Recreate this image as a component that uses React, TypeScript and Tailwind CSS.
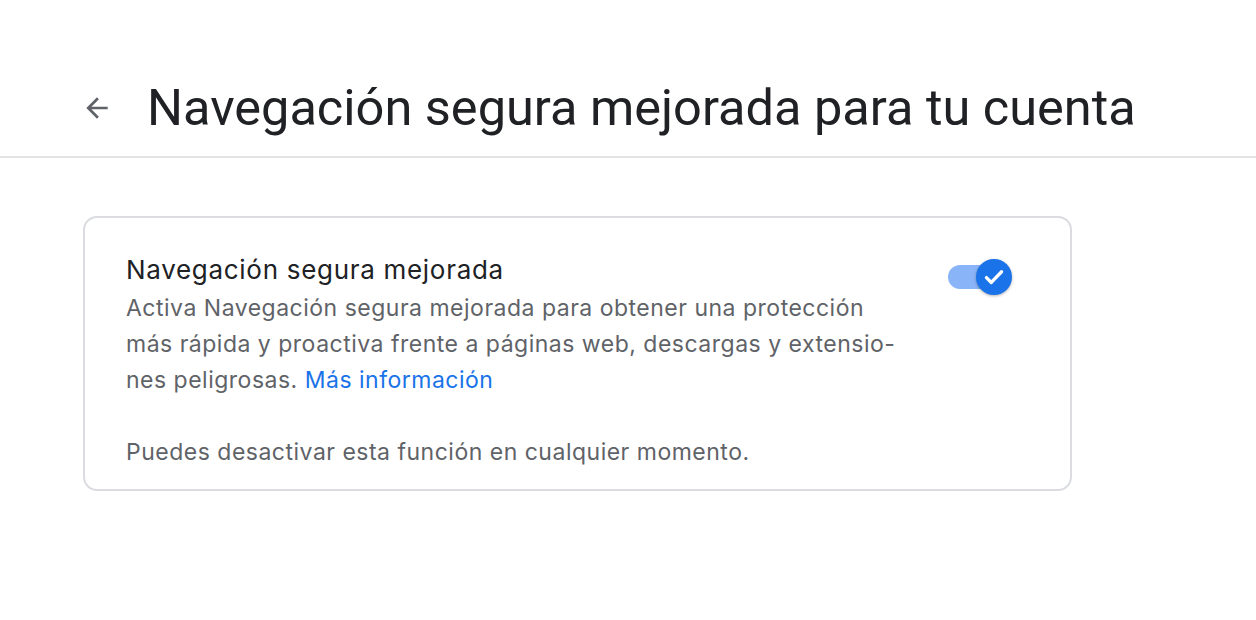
import React from 'react';

const ArrowLeft = () => (
  <svg viewBox="0 0 24 24" className="w-[32px] h-[32px]" fill="#5f6368">
    <path d="M20 11H7.83l5.59-5.59L12 4l-8 8 8 8 1.41-1.41L7.83 13H20v-2z" />
  </svg>
);

const Toggle = () => (
  <div className="relative w-[66px] h-[40px] flex items-center">
    <div className="w-[52px] h-[24px] rounded-full bg-[#8ab4f8]" />
    <div className="absolute left-[28px] top-[2px] w-[36px] h-[36px] rounded-full bg-[#1a73e8] shadow-[0_1px_3px_rgba(0,0,0,0.3)] flex items-center justify-center">
      <svg viewBox="0 0 24 24" className="w-[28px] h-[28px]" fill="none" stroke="white" strokeWidth="2.8" strokeLinecap="round" strokeLinejoin="round">
        <path d="M5.5 12.5l4.2 4.2L18.5 7.5" />
      </svg>
    </div>
  </div>
);

export default function App() {
  return (
    <div className="min-h-screen bg-white font-['Inter',sans-serif]">
      {/* Header */}
      <div className="h-[158px] border-b-2 border-[#e3e3e3] flex items-center gap-[34px] pl-[81px] pt-[60px]">
        <ArrowLeft />
        <h1 className="font-['Roboto',sans-serif] text-[50.5px] leading-none text-[#202124] font-normal">
          Navegación segura mejorada para tu cuenta
        </h1>
      </div>

      {/* Card */}
      <div className="pt-[58px] pl-[83px]">
        <div className="w-[989px] h-[275px] rounded-[14px] border-2 border-[#dadce0] pl-[41px] pr-[56px] pt-[34px] flex justify-between">
          <div>
            <div className="text-[26px] leading-[36px] tracking-[0.7px] text-[#202124]">Navegación segura mejorada</div>
            <p className="mt-[2px] text-[23px] leading-[36px] tracking-[0.5px] text-[#5f6368]">
              Activa Navegación segura mejorada para obtener una protección
              <br />
              más rápida y proactiva frente a páginas web, descargas y extensio-
              <br />
              nes peligrosas. <span className="text-[#1a73e8]">Más información</span>
            </p>
            <p className="mt-[36px] text-[23px] leading-[36px] tracking-[0.5px] text-[#5f6368]">
              Puedes desactivar esta función en cualquier momento.
            </p>
          </div>
          <div className="pt-[5px]">
            <Toggle />
          </div>
        </div>
      </div>
    </div>
  );
}
